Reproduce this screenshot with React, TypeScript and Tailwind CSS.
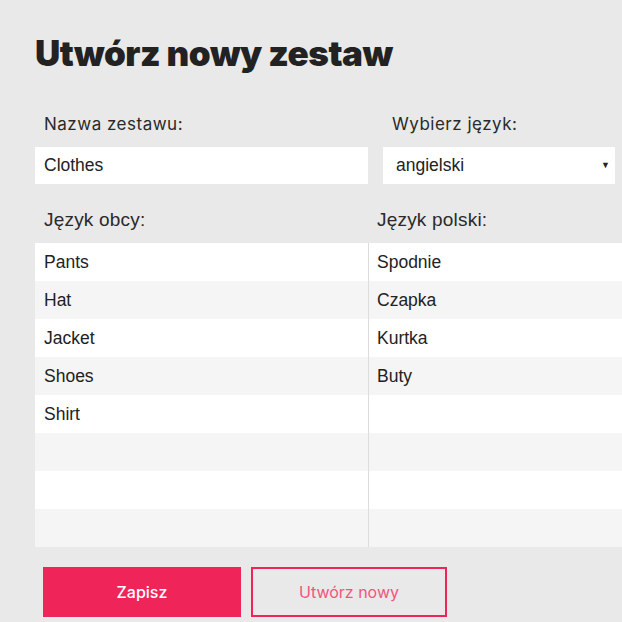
const foreign = ['Pants', 'Hat', 'Jacket', 'Shoes', 'Shirt', '', '', ''];
const polish = ['Spodnie', 'Czapka', 'Kurtka', 'Buty', '', '', '', ''];

export default function App() {
  return (
    <div className="min-h-screen w-[622px] overflow-hidden bg-[#e9e9e9] pl-[35px] text-[#222]">
      <h1 className="pt-[33px] font-['Inter',sans-serif] text-[35px] leading-[40px] font-black tracking-[-0.5px] text-[#222]">
        Utwórz nowy zestaw
      </h1>

      <div className="mt-[38px] flex gap-[15px]">
        <div className="w-[333px]">
          <label className="block pl-[9px] font-['Inter',sans-serif] text-[17px] leading-[26px] tracking-[0.5px] text-[#2a2a2a]">
            Nazwa zestawu:
          </label>
          <div className="mt-[10px] flex h-[37px] items-center bg-white pl-[9px] font-['Liberation_Sans',Arial,sans-serif] text-[17.5px]">
            Clothes
          </div>
        </div>
        <div className="w-[232px]">
          <label className="block pl-[9px] font-['Inter',sans-serif] text-[17px] leading-[26px] tracking-[0.5px] text-[#2a2a2a]">
            Wybierz język:
          </label>
          <div className="mt-[10px] flex h-[37px] items-center justify-between bg-white pl-[13px] pr-[5px] font-['Liberation_Sans',Arial,sans-serif] text-[17.5px]">
            <span>angielski</span>
            <span className="text-[9px] text-[#222]">▼</span>
          </div>
        </div>
      </div>

      <div className="mt-[21px] flex font-['Liberation_Sans',Arial,sans-serif] text-[19px] leading-[29px] tracking-[0.2px] text-[#2a2a2a]">
        <div className="w-[334px] pl-[9px]">Język obcy:</div>
        <div className="pl-[8px]">Język polski:</div>
      </div>

      <div className="mt-[9px] flex font-['Liberation_Sans',Arial,sans-serif] text-[17.5px] text-[#222]">
        <div className="w-[334px] border-r border-[#dddddd]">
          {foreign.map((w, i) => (
            <div
              key={i}
              className={`flex h-[38px] items-center pl-[9px] ${i % 2 === 0 ? 'bg-white' : 'bg-[#f5f5f5]'}`}
            >
              {w}
            </div>
          ))}
        </div>
        <div className="flex-1">
          {polish.map((w, i) => (
            <div
              key={i}
              className={`flex h-[38px] items-center pl-[8px] ${i % 2 === 0 ? 'bg-white' : 'bg-[#f5f5f5]'}`}
            >
              {w}
            </div>
          ))}
        </div>
      </div>

      <div className="mt-[20px] flex gap-[10px] pl-[8px] font-['Inter',sans-serif] text-[16px]">
        <button className="h-[50px] w-[198px] bg-[#ef2459] font-medium text-white">Zapisz</button>
        <button className="h-[50px] w-[196px] border-2 border-[#ef2459] text-[#f0557a]">Utwórz nowy</button>
      </div>
    </div>
  );
}
